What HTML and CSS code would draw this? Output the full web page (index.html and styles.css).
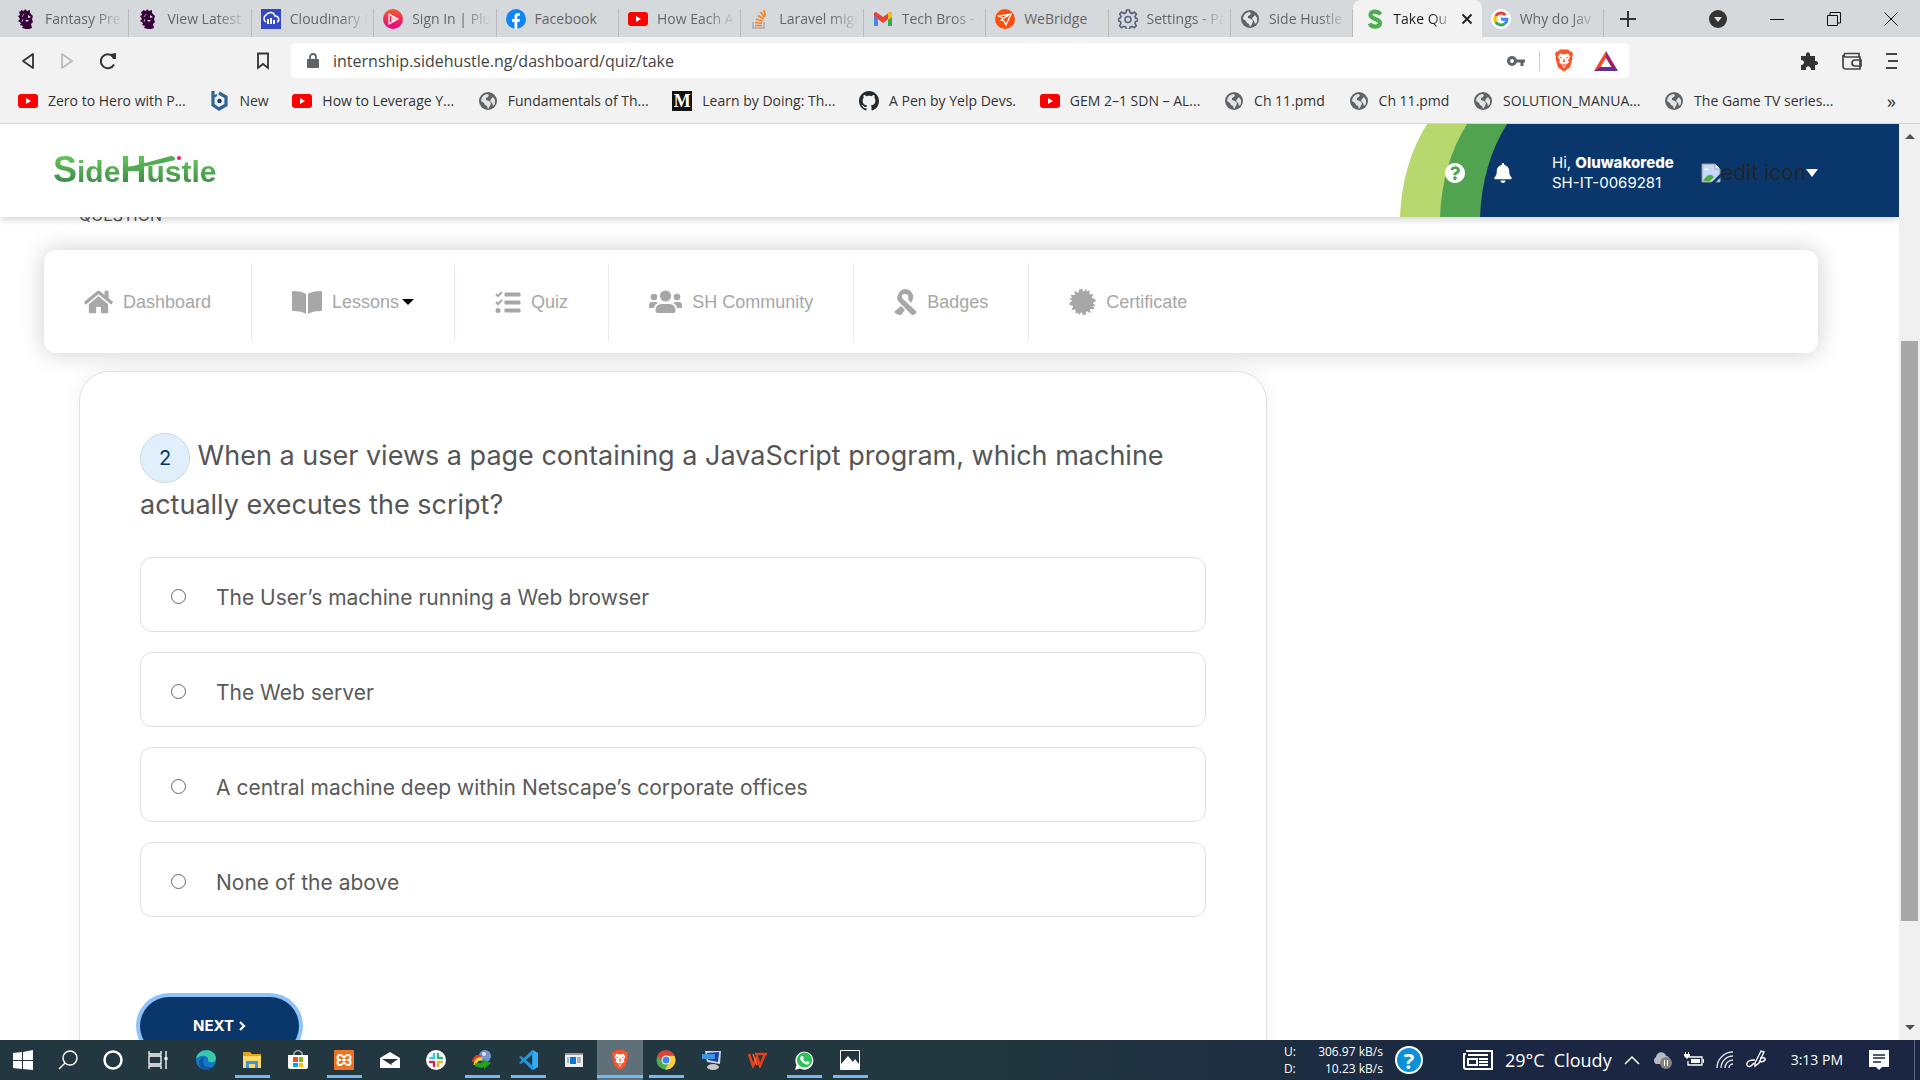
FILE: index.html
```html
<!DOCTYPE html>
<html lang="en">
<head>
<meta charset="utf-8">
<title>Take Quiz</title>
<link rel="stylesheet" href="styles.css">
</head>
<body>
<svg class="sprite" aria-hidden="true">
  <symbol id="yt" viewBox="0 0 20 20"><rect y="3" width="20" height="14" rx="3" fill="#f00"/><path d="M8 7l5 3-5 3z" fill="#fff"/></symbol>
  <symbol id="globe" viewBox="0 0 20 20"><circle cx="10" cy="10" r="9" fill="#5f6368"/><path d="M3 10c0-3 2-6 6-7l2 1-1 2-2 1v2l3 1 2 2-1 3-2 3-1-3-2-1-1-2zM13 8l2-2 2 3v4l-2 2-1-3-2-2z" fill="#e4e4e4"/></symbol>
  <symbol id="lion" viewBox="0 0 20 20"><path d="M5 1l3 1 1-2 2 2 3-1 0 3 3 3-1 3 1 3-2 2 1 4-3 1-3 0-4-1 1-2-3-1 1-2-3-2 2-2-2-3 2-1-1-3 2-1z" fill="#37003c"/><path d="M12 6l3 2-3 1zM9 11l4 0-2 2z" fill="#e6dfe8"/><path d="M8 5l-2 3M7 10l-1 3" stroke="#a894ad"/></symbol>
  <symbol id="brave" viewBox="0 0 20 22"><path d="M6 0h8l2 2 2 0 1 3-1 2 .5 2-2.500 9-6 4-6-4L1.500 9 2 7 1 5l1-3h2z" fill="#fb542b"/><path d="M6 4l4 1 4-1 2 3-2 4 1 2-3 2-2 4-2-4-3-2 1-2-2-4z" fill="#fff"/><path d="M5 7l3 1-1 1zM15 7l-3 1 1 1zM10 8l1 4-1 1-1-1zM8 14l2 1 2-1-2 3z" fill="#fb542b"/></symbol>
</svg>

<div class="tabstrip">
  <nav class="tabs" aria-label="Tabs">
    <div class="tab"><svg class="ico"><use href="#lion"/></svg><span>Fantasy Prem</span></div>
    <div class="tab"><svg class="ico"><use href="#lion"/></svg><span>View Latest</span></div>
    <div class="tab"><svg class="ico" viewBox="0 0 20 20"><rect width="20" height="20" fill="#3448c5"/><path d="M5 13a4 4 0 0 1 0-7c3-4 8-3 9 1 4 0 5 5 2 6" fill="none" stroke="#fff" stroke-width="1.500"/><path d="M6 10h2v5H6zM9 9h2v6H9zM12 11h2v4h-2z" fill="#fff"/></svg><span>Cloudinary M</span></div>
    <div class="tab"><svg class="ico" viewBox="0 0 20 20"><defs><linearGradient id="ps" x2="0" y2="1"><stop stop-color="#f05a28"/><stop offset="1" stop-color="#ec008c"/></linearGradient></defs><circle cx="10" cy="10" r="10" fill="url(#ps)"/><path d="M6 5l9 5-9 5zM9 8l3 2-3 2z" fill="none" stroke="#fff" stroke-width="1.200"/></svg><span>Sign In | Plu</span></div>
    <div class="tab"><svg class="ico" viewBox="0 0 20 20"><circle cx="10" cy="10" r="10" fill="#1085f5"/><path d="M8.500 20v-7H6v-3h2.500V8c0-3 1.500-4 3.500-4l2 .2v2.500h-1.300c-1 0-1.400.6-1.400 1.300v2H14l-.5 3h-2.200v7z" fill="#fff"/></svg><span class="whole">Facebook</span></div>
    <div class="tab"><svg class="ico"><use href="#yt"/></svg><span>How Each A</span></div>
    <div class="tab"><svg class="ico" viewBox="0 0 20 20"><path d="M3 13v6h11v-6" fill="none" stroke="#a9abae" stroke-width="1.500"/><path d="M5 16.500h7M5.200 13.500l7 .7M6 10.200l6.600 1.800M8 6.500l5.500 3.700M10.500 3l4 5.500M14 1l1.200 6.500" stroke="#f48024" stroke-width="1.600"/></svg><span>Laravel migr</span></div>
    <div class="tab"><svg class="ico" viewBox="0 0 20 20"><path d="M1 5v12h4V9z" fill="#4285f4"/><path d="M19 5v12h-4V9z" fill="#34a853"/><path d="M1 4l2-1 7 5 7-5 2 1v3l-9 7-9-7z" fill="#ea4335"/><path d="M15 4.500l2-1.500 2 1v4l-4 3z" fill="#fbbc04"/></svg><span>Tech Bros - A</span></div>
    <div class="tab"><svg class="ico" viewBox="0 0 20 20"><circle cx="10" cy="10" r="10" fill="#ff4d0d"/><path d="M4 7l12-2-5 11-2-4-3-1 8-5-6 3z" fill="#ff4d0d" stroke="#fff" stroke-width="1.300"/></svg><span class="whole">WeBridge</span></div>
    <div class="tab"><svg class="ico" viewBox="0 0 20 20"><path d="M8.500 1h3l.6 2.600 2 .9 2.300-1.400 2 2-1.400 2.400.8 1.700 2 .5v2l-2.100.8-.8 1.900 1.400 2.300-2 2-2.300-1.300-2 .8-.6 2.300h-3l-.6-2.400-2-.8-2.200 1.400-2-2L3 14.300l-.8-1.900L.500 12V9.500L2.200 9 3 7.300 1.700 5l2-2L6 4.500l2-.9z" fill="none" stroke="#5a5f7d" stroke-width="1.600"/><circle cx="10" cy="10.500" r="3" fill="none" stroke="#5a5f7d" stroke-width="1.500"/></svg><span>Settings - Pa</span></div>
    <div class="tab"><svg class="ico"><use href="#globe"/></svg><span>Side Hustle</span></div>
    <div class="tab active"><svg class="ico" viewBox="0 0 20 20"><path d="M15.500 5.500C13 1.500 5.500 1.500 5.500 6s9.500 3.500 9.500 8-8 5-10.500.500" fill="none" stroke="#4cae4f" stroke-width="4.200"/></svg><span>Take Qu</span><button class="x" aria-label="Close tab"><svg width="12" height="12" viewBox="0 0 12 12"><path d="M1.500 1.500l9 9m0-9l-9 9" stroke="#222" stroke-width="2"/></svg></button></div>
    <div class="tab"><svg class="ico" viewBox="0 0 20 20"><circle cx="10" cy="10" r="10" fill="#fff"/><g fill="none" stroke-width="3"><path d="M14.500 6A6 6 0 0 0 4.800 7" stroke="#ea4335"/><path d="M4.800 7a6 6 0 0 0 0 6" stroke="#fbbc05"/><path d="M4.800 13a6 6 0 0 0 9 1.600" stroke="#34a853"/><path d="M13.800 14.600A6 6 0 0 0 16 10.200h-6" stroke="#4285f4"/></g></svg><span>Why do Jav</span></div>
  </nav>
  <button class="plain" aria-label="New tab"><svg width="16" height="16" viewBox="0 0 16 16"><path d="M8 0v16M0 8h16" stroke="#333" stroke-width="2"/></svg></button>
  <div class="winctl">
    <button class="plain" aria-label="Search tabs"><svg width="18" height="18" viewBox="0 0 18 18"><circle cx="9" cy="9" r="9" fill="#333"/><path d="M5 7h8l-4 5z" fill="#ddd"/></svg></button>
    <button class="plain" aria-label="Minimize"><svg width="14" height="14" viewBox="0 0 14 14"><path d="M0 7.500h14" stroke="#111"/></svg></button>
    <button class="plain" aria-label="Restore"><svg width="14" height="14" viewBox="0 0 14 14"><path d="M.500 3.500h10v10H.500zM3 3V.500h10.500V11H11" fill="none" stroke="#111"/></svg></button>
    <button class="plain" aria-label="Close"><svg width="14" height="14" viewBox="0 0 14 14"><path d="M.500.500l13 13m0-13l-13 13" stroke="#111"/></svg></button>
  </div>
</div>

<div class="toolbar">
  <div class="navbtns">
    <button class="plain" aria-label="Back"><svg width="14" height="18" viewBox="0 0 14 18"><path d="M12 2v14L2 9z" fill="none" stroke="#333" stroke-width="1.800" stroke-linejoin="round"/></svg></button>
    <button class="plain" aria-label="Forward"><svg width="14" height="18" viewBox="0 0 14 18"><path d="M2 2v14l10-7z" fill="none" stroke="#bbb" stroke-width="1.800" stroke-linejoin="round"/></svg></button>
    <button class="plain" aria-label="Reload"><svg width="18" height="18" viewBox="0 0 18 18"><path d="M15 12.500A7 7 0 1 1 14 4.500" fill="none" stroke="#333" stroke-width="2"/><path d="M11 2l6-1v6l-3 0z" fill="#333"/></svg></button>
  </div>
  <button class="plain mark" aria-label="Bookmark"><svg width="14" height="18" viewBox="0 0 14 18"><path d="M2 1.500h10v14.500l-5-4-5 4z" fill="none" stroke="#333" stroke-width="1.800"/></svg></button>
  <div class="address">
    <svg width="12" height="16" viewBox="0 0 12 16"><path d="M3 7V4a3 3 0 0 1 6 0v3" fill="none" stroke="#5f6368" stroke-width="1.800"/><rect y="6" width="12" height="9" rx="1" fill="#5f6368"/></svg>
    <input class="url" aria-label="Address" value="internship.sidehustle.ng/dashboard/quiz/take">
    <svg width="18" height="12" viewBox="0 0 18 12"><circle cx="5" cy="6" r="3.500" fill="none" stroke="#5f6368" stroke-width="3"/><path d="M8 6h10M15 6v5" stroke="#5f6368" stroke-width="3"/></svg>
    <i class="sep"></i>
    <svg width="20" height="23"><use href="#brave"/></svg>
    <svg width="24" height="20" viewBox="0 0 24 20"><path d="M12 0L0 20l6-3 6-10z" fill="#ff4724"/><path d="M12 0l12 20-6-3-6-10z" fill="#9e1f63"/><path d="M0 20h24l-6-4H6z" fill="#662d91"/></svg>
  </div>
  <div class="exts">
    <button class="plain" aria-label="Extensions"><svg width="18" height="18" viewBox="0 0 18 18"><path d="M1 4h5c-1-5 5-5 4 0h5v5c4-1 4 5 0 4v5h-4c0-5-6-5-5 0H1v-5c4 0 4-5 0-5z" fill="#333"/></svg></button>
    <button class="plain" aria-label="Wallet"><svg width="20" height="18" viewBox="0 0 20 18"><path d="M17 5V1.500H3a2 2 0 0 0 0 3.500h15v12H4q-3 0-3-3V3M19 8h-6a3 3 0 0 0 0 6h6z" fill="none" stroke="#444" stroke-width="1.700"/></svg></button>
    <button class="plain" aria-label="Menu"><svg width="12" height="18" viewBox="0 0 12 18"><path d="M0 2h11M2 9h10M0 16h11" stroke="#444" stroke-width="2"/></svg></button>
  </div>
</div>

<nav class="bookmarks" aria-label="Bookmarks">
  <a href="#"><svg class="ico"><use href="#yt"/></svg>Zero to Hero with P...</a>
  <a href="#"><svg class="ico" viewBox="0 0 20 20"><path d="M10 2L17 6v8l-7 4-6-4V0" fill="none" stroke="#2f6690" stroke-width="3.200"/><path d="M4 6l4-2" stroke="#2f6690" stroke-width="2"/><circle cx="10.500" cy="10" r="2.200" fill="#1b3f66"/></svg>New</a>
  <a href="#"><svg class="ico"><use href="#yt"/></svg>How to Leverage Y...</a>
  <a href="#"><svg class="ico"><use href="#globe"/></svg>Fundamentals of Th...</a>
  <a href="#"><span class="ico medium">M</span>Learn by Doing: Th...</a>
  <a href="#"><svg class="ico" viewBox="0 0 16 16"><path fill="#24292e" d="M8 0C3.580 0 0 3.580 0 8c0 3.540 2.290 6.530 5.470 7.590.4.070.550-.170.550-.380 0-.190-.010-.820-.010-1.490-2.010.370-2.530-.490-2.690-.940-.090-.230-.480-.940-.820-1.130-.280-.150-.680-.520-.010-.530.630-.010 1.080.580 1.230.820.720 1.210 1.870.870 2.330.660.070-.520.280-.870.510-1.070-1.780-.2-3.640-.890-3.640-3.950 0-.870.310-1.590.820-2.150-.080-.2-.360-1.020.080-2.120 0 0 .670-.210 2.200.820.640-.180 1.320-.270 2-.270s1.360.090 2 .270c1.530-1.040 2.200-.820 2.200-.820.440 1.100.160 1.920.080 2.120.510.560.820 1.270.820 2.150 0 3.070-1.870 3.750-3.650 3.950.290.250.540.730.540 1.480 0 1.070-.010 1.930-.010 2.200 0 .210.150.460.550.380A8.010 8.010 0 0 0 16 8c0-4.420-3.580-8-8-8z"/></svg>A Pen by Yelp Devs.</a>
  <a href="#"><svg class="ico"><use href="#yt"/></svg>GEM 2–1 SDN – AL...</a>
  <a href="#"><svg class="ico"><use href="#globe"/></svg>Ch 11.pmd</a>
  <a href="#"><svg class="ico"><use href="#globe"/></svg>Ch 11.pmd</a>
  <a href="#"><svg class="ico"><use href="#globe"/></svg>SOLUTION_MANUA...</a>
  <a href="#"><svg class="ico"><use href="#globe"/></svg>The Game TV series...</a>
  <button class="plain more" aria-label="More bookmarks">»</button>
</nav>

<div class="viewport">
  <div class="site">
    <header class="header">
      <a class="logo" href="#"><span class="big">S</span><span>ide</span><span class="big">H</span><span>ustle</span>
        <svg class="swoosh" width="60" height="16" viewBox="0 0 60 16"><path d="M0 14Q25 8 50 1q4 0 4 4Q28 12 0 14z" fill="#51ac51"/><circle cx="58" cy="3" r="2" fill="#f0147c"/></svg></a>
      <div class="account">
        <svg class="waves" viewBox="0 0 499 93" preserveAspectRatio="none"><path d="M0 93Q2 40 27 0H499V93z" fill="#b6d86f"/><path d="M40 93Q42 40 67 0H499V93z" fill="#52a350"/><path d="M80 93Q82 40 107 0H499V93z" fill="#09376b"/></svg>
        <button class="plain" aria-label="Help"><svg width="20" height="20" viewBox="8 8 496 496"><path fill="#fff" d="M504 256c0 137-111 248-248 248S8 393 8 256C8 119 119 8 256 8s248 111 248 248zM262.700 90c-54.500 0-89.300 23-116.600 63.800-3.500 5.300-2.400 12.400 2.700 16.200l34.700 26.300c5.200 4 12.600 3 16.700-2.100 17.900-22.700 30.100-35.800 57.300-35.800 20.400 0 45.700 13.100 45.700 33 0 15-12.400 22.700-32.500 34C247.100 238.500 216 254.900 216 296v4c0 6.600 5.400 12 12 12h56c6.600 0 12-5.400 12-12v-1.300c0-28.500 83.200-29.600 83.200-106.700 0-58-60.200-102-116.500-102zM256 338c-25.400 0-46 20.600-46 46s20.600 46 46 46 46-20.600 46-46-20.600-46-46-46z"/></svg></button>
        <button class="plain bell" aria-label="Notifications"><svg width="18" height="20" viewBox="0 0 448 512"><path fill="#fff" d="M224 512c35.300 0 64-28.700 64-64H160c0 35.300 28.700 64 64 64zm215.400-149.700c-19.300-20.800-55.500-52-55.500-154.300 0-77.700-54.500-139.900-127.900-155.200V32c0-17.700-14.300-32-32-32s-32 14.300-32 32v20.800C118.600 68.100 64.100 130.300 64.100 208c0 102.300-36.200 133.500-55.500 154.300-6 6.400-8.700 14.200-8.600 21.700.1 16.400 13 32 32.100 32h383.800c19.100 0 32-15.600 32.100-32 0-7.600-2.600-15.300-8.600-21.700z"/></svg></button>
        <div class="who">Hi, <b>Oluwakorede</b><br>SH-IT-0069281</div>
        <button class="plain avatar"><svg width="20" height="20" viewBox="0 0 20 20"><path d="M1 1h13l5 5v13H1z" fill="#c5d6f8" stroke="#999"/><path d="M14 1v5h5" fill="#fff" stroke="#999"/><path d="M3 7q2-4 5 0z" fill="#fff"/><path d="M2 18q6-10 11-4l-4 4z" fill="#4caf3f"/><path d="M20 10L10 20h4l6-6z" fill="#09376b"/></svg><span>edit icon</span><svg width="12" height="8" viewBox="0 0 12 8"><path d="M0 0h12L6 8z" fill="#fff"/></svg></button>
      </div>
    </header>

    <h2 class="crumb">QUESTION</h2>

    <nav class="menu" aria-label="Main">
      <a href="#"><svg width="29" height="24" viewBox="0 24 576 464"><path d="M280.400 148.300L96 300.100V464a16 16 0 0 0 16 16l112-.3a16 16 0 0 0 16-16V368a16 16 0 0 1 16-16h64a16 16 0 0 1 16 16v95.600a16 16 0 0 0 16 16L464 480a16 16 0 0 0 16-16V300L295.700 148.300a12.200 12.200 0 0 0-15.300 0zM571.600 251.500L488 182.600V44a12 12 0 0 0-12-12h-56a12 12 0 0 0-12 12v72.600L318.500 43a48 48 0 0 0-61 0L4.300 251.500a12 12 0 0 0-1.600 16.900l25.500 31A12 12 0 0 0 45 301l235.300-193.700a12.200 12.200 0 0 1 15.300 0L531 301a12 12 0 0 0 16.900-1.600l25.500-31a12 12 0 0 0-1.800-16.900z"/></svg>Dashboard</a>
      <a href="#"><svg width="30" height="24" viewBox="0 0 30 24"><path d="M0 2q0-1 1-1 9 0 13 3v20q-4-3-13-3-1 0-1-1zM30 2q0-1-1-1-9 0-13 3v20q4-3 13-3 1 0 1-1z"/></svg><span>Lessons<i class="caret"></i></span></a>
      <a href="#"><svg width="26" height="22" viewBox="0 0 26 22"><path d="M10 2h15v3H10zM10 10h15v3H10zM10 18h15v3H10z" stroke="#a7a7a7"/><circle cx="3" cy="19.500" r="2.500"/><path d="M1 3l2 2 4-4M1 11l2 2 4-4" fill="none" stroke="#a7a7a7" stroke-width="2"/></svg>Quiz</a>
      <a href="#"><svg width="33" height="24" viewBox="0 0 33 24"><circle cx="5" cy="7" r="3.300"/><circle cx="28" cy="7" r="3.300"/><circle cx="16.500" cy="6" r="5.600"/><path d="M0 18v-3q0-3 3-3h3q2 0 3 1-4 2-4 5zM33 18v-3q0-3-3-3h-3q-2 0-3 1 4 2 4 5zM6.500 21q0-7 6-7h8q6 0 6 7 0 2-2 2h-16q-2 0-2-2z"/></svg>SH Community</a>
      <a href="#"><svg width="23" height="26" viewBox="0 0 23 26"><path d="M11 0Q17 0 19 6q1 3-2 8l-3-4q1-2 0-4-3-2-6 0-1 2 1 4l13 12q1 1 0 2l-2 2q-1 0-2 0L5 13Q2 10 4 6 6 0 11 0zM7 17l4 4-4 5q-1 0-2 0l-4-2q-1-1 0-2z"/></svg>Badges</a>
      <a href="#"><svg width="27" height="26" viewBox="-13 -13 26 26"><g id="rays"><path d="M-2.500-9L-1.500-13h1L1-10 3-12.500h1L4.500-8zM2-9L6-11.500h1L7-7.500 10.500-8l.5.500L9-4 13-3v1l-3 2z"/><circle r="10"/></g><use href="#rays" transform="rotate(90)"/><use href="#rays" transform="rotate(180)"/><use href="#rays" transform="rotate(270)"/></svg>Certificate</a>
    </nav>

    <form class="card">
      <h1 class="question"><span class="num">2</span> When a user views a page containing a JavaScript program, which machine actually executes the script?</h1>
      <div class="options">
        <label class="option"><input type="radio" name="answer"><span>The User’s machine running a Web browser</span></label>
        <label class="option"><input type="radio" name="answer"><span>The Web server</span></label>
        <label class="option"><input type="radio" name="answer"><span>A central machine deep within Netscape’s corporate offices</span></label>
        <label class="option"><input type="radio" name="answer"><span>None of the above</span></label>
      </div>
      <button type="button" class="next">NEXT <svg width="7" height="10" viewBox="0 0 7 10"><path d="M1 1l4 4-4 4" fill="none" stroke="#fff" stroke-width="2.200"/></svg></button>
    </form>
  </div>
  <div class="scrollbar"><i class="up"></i><div class="track"><i class="thumb"></i></div><i class="down"></i></div>
</div>

<footer class="taskbar">
  <div class="sys">
    <span><svg width="20" height="20" viewBox="0 0 20 20"><path d="M0 3l9-1v8H0zM10 2l10-2v10H10zM0 11h9v8l-9-1zM10 11h10v9l-10-1z" fill="#fff"/></svg></span>
    <span><svg width="20" height="20" viewBox="0 0 20 20"><circle cx="12" cy="8" r="7" fill="none" stroke="#fff" stroke-width="1.400"/><path d="M7 13l-6 6" stroke="#fff" stroke-width="1.500"/></svg></span>
    <span><svg width="20" height="20" viewBox="0 0 20 20"><circle cx="10" cy="10" r="8.500" fill="none" stroke="#fff" stroke-width="2.500"/></svg></span>
    <span><svg width="20" height="20" viewBox="0 0 20 20"><path d="M1 1v3h12V1M1 6h12v8H1zM1 19v-3h12v3M18 1v18" fill="none" stroke="#fff" stroke-width="1.300"/><path d="M16.500 7h3v3h-3z" fill="#fff"/></svg></span>
  </div>
  <div class="apps">
    <span><svg width="20" height="20" viewBox="0 0 20 20"><circle cx="10" cy="10" r="10" fill="#1478c8"/><path d="M0 9C1-2 19-3 20 8c0 5-6 5-8 3 1-4-3-6-6-5C3 6 1 8 0 9z" fill="#39c8a8"/><path d="M7 10c-1 6 5 9 11 6-5 7-15 4-15-3 0-4 3-6 6-6-2 1-2 2-2 3z" fill="#1353a4"/></svg></span>
    <span class="run"><svg width="20" height="20" viewBox="0 0 20 20"><path d="M1 2h7l2 2h9v12H1z" fill="#e5a50c"/><path d="M1 6h18v12H1z" fill="#ffd868"/><path d="M4 18v-7h12v7h-3v-4H7v4z" fill="#3a96dd"/></svg></span>
    <span><svg width="20" height="20" viewBox="0 0 20 20"><path d="M6 6V3q4-5 8 0v3" fill="none" stroke="#aaa" stroke-width="1.500"/><path d="M0 5h20v12q0 2-2 2H2q-2 0-2-2z" fill="#fff"/><path d="M5 7h5v5H5z" fill="#f25022"/><path d="M11 7h4v5h-4z" fill="#7fba00"/><path d="M5 13h5v4H5z" fill="#00a4ef"/><path d="M11 13h4v4h-4z" fill="#ffb900"/></svg></span>
    <span class="run"><svg width="20" height="20" viewBox="0 0 20 20"><rect width="20" height="20" rx="1" fill="#ee7420"/><path d="M7 10H6a2 2 0 0 1 0-5q2 0 4 2.500Q12 5 14 5a2 2 0 0 1 0 5h-1M7 10H6a2 2 0 0 0 0 5q2 0 4-2.500Q12 15 14 15a2 2 0 0 0 0-5h-1M8 10h4" fill="none" stroke="#fff" stroke-width="2"/></svg></span>
    <span><svg width="20" height="18" viewBox="0 0 20 18"><path d="M0 7l10-6 10 6v10H0z" fill="#fff"/><path d="M2 8l16 0-7 5 2 2z" fill="#22353f"/></svg></span>
    <span><svg width="20" height="20" viewBox="0 0 20 20"><circle cx="10" cy="10" r="10" fill="#fff"/><g stroke-width="2.400" stroke-linecap="round"><path d="M8 4v4M4.500 8H8" stroke="#36c5f0"/><path d="M12 4v4M12 8h4" stroke="#2eb67d"/><path d="M12 12v4M12 12h4" stroke="#ecb22e"/><path d="M8 12v4M4 12h4" stroke="#e01e5a"/></g></svg></span>
    <span class="run"><svg width="20" height="20" viewBox="0 0 20 20"><circle cx="13" cy="6" r="6" fill="#7894cc"/><circle cx="12" cy="4" r="2" fill="#dce6fa"/><path d="M1 12Q4 4 9 7" fill="none" stroke="#e43b26" stroke-width="3"/><path d="M3 15Q4 8 10 9" fill="none" stroke="#f5dc22" stroke-width="3"/><path d="M3 16q6 3 9 1v2l7-6-8-4v3q-4 2-8 1z" fill="#24a321"/></svg></span>
    <span class="run"><svg width="20" height="20" viewBox="0 0 20 20"><path d="M14 0l6 3v14l-6 3L1 7l2-1 11 9V5L3 14l-2-1z" fill="#2596de"/><path d="M15 0l5 3v14l-5 3z" fill="#38a9f1"/></svg></span>
    <span><svg width="18" height="14" viewBox="0 0 18 14"><path d="M0 0h18v14H0z" fill="#eee"/><path d="M0 0h18v2H0z" fill="#999"/><path d="M5 4h6v7H5z" fill="#0878d4"/><path d="M2 5h2M2 7h2M2 9h2M12 5h4M12 7h4M12 9h4" stroke="#777"/></svg></span>
    <span class="run on"><svg width="18" height="20"><use href="#brave"/></svg></span>
    <span class="run"><svg width="20" height="20" viewBox="0 0 20 20"><circle cx="10" cy="10" r="9.500" fill="#4caf50"/><path d="M1.500 5.500a9.500 9.500 0 0 1 17 0H10L6 12z" fill="#db4437"/><path d="M18.500 6A9.500 9.500 0 0 1 9 19.500l5-8L13 6z" fill="#ffcd40"/><circle cx="10" cy="10" r="4.500" fill="#fff"/><circle cx="10" cy="10" r="3.500" fill="#4285f4"/></svg></span>
    <span><svg width="20" height="20" viewBox="0 0 20 20"><path d="M3 1l16 0-1 13-13-2z" fill="#ccd4e0"/><path d="M5 3l12-1-1 10-10-2z" fill="#1c3ca8"/><path d="M0 4h13v5H0z" fill="#3c94e6"/><ellipse cx="11" cy="17" rx="6" ry="3" fill="#c8c8c8"/></svg></span>
    <span><svg width="20" height="16" viewBox="0 0 20 16"><path d="M1 2l4 12 4-9 3 9 5-12M7 2h12" fill="none" stroke="#e8401c" stroke-width="2.600"/><path d="M5 2l4 11" stroke="#ff6a3a" stroke-width="1.500"/></svg></span>
    <span class="run"><svg width="20" height="20" viewBox="0 0 20 20"><path d="M1 20l1.500-5A9 9 0 1 1 6 18.500z" fill="#fff"/><circle cx="10.500" cy="10" r="7.600" fill="#29c451"/><path d="M7 6l2 0 1 2-1 1.500 3 2.500 1.500-1 2 1q0 3-3 2.500C9 14 6 10 6 8z" fill="#fff"/></svg></span>
    <span class="run"><svg width="20" height="20" viewBox="0 0 20 20"><path d="M.500.500h19v19H.500z" fill="#22353f" stroke="#fff"/><path d="M1 14l7-8 5 6 2-3 4 5v5H1z" fill="#fff"/></svg></span>
  </div>
  <div class="tray">
    <dl class="net"><dt>U:</dt><dd>306.97 kB/s</dd><dt>D:</dt><dd>10.23 kB/s</dd></dl>
    <span class="help">?</span>
    <svg class="news" width="30" height="20" viewBox="0 0 30 20"><path d="M3 1h26v18H3q-2 0-2-2V4h2M5 5h20M5 9h9v6H5zM16 9h9M16 12h9M16 15h9" fill="none" stroke="#fff" stroke-width="2"/></svg>
    <span class="weather">29°C&nbsp; Cloudy</span>
    <svg width="16" height="10" viewBox="0 0 16 10"><path d="M1 9l7-7 7 7" fill="none" stroke="#fff" stroke-width="1.500"/></svg>
    <svg width="20" height="20" viewBox="0 0 20 20"><path d="M4 14a4 4 0 0 1 0-7c1-6 9-6 10-1 5 0 5 8 1 8z" fill="#b5bcc6"/><circle cx="14" cy="13" r="6" fill="#85827e"/><path d="M12.500 10v6M15.500 10v6" stroke="#fff"/></svg>
    <svg width="20" height="16" viewBox="0 0 20 16"><path d="M5 5h13v8H4V9" fill="none" stroke="#fff" stroke-width="1.300"/><path d="M7 7h9v4H7zM19 7h1v4h-1zM0 2h6v2L3 7 0 4zM1 0h1v2H1zM4 0h1v2H4z" fill="#fff"/></svg>
    <svg width="18" height="18" viewBox="0 0 18 18"><path d="M1 17A16 16 0 0 1 17 1M5 17A12 12 0 0 1 17 5M9 17a8 8 0 0 1 8-8M13 17a4 4 0 0 1 4-4" fill="none" stroke="#d9dde4" stroke-width="1.400"/></svg>
    <svg width="20" height="20" viewBox="0 0 20 20"><path d="M9 13L15 1l3 1-5 11-4 3zM9 10q-9 0-8 5 2 4 7-2M14 8q6-1 5 2-2 3-6 1" fill="none" stroke="#fff" stroke-width="1.400"/></svg>
    <time>3:13 PM</time>
    <svg width="20" height="20" viewBox="0 0 20 20"><path d="M0 0h20v17h-7l-3 3-3-3H0z" fill="#fff"/><path d="M4 5h12M4 8h12M4 12h8" stroke="#1b2743" stroke-width="1.300"/></svg>
  </div>
</footer>
</body>
</html>
```
FILE: styles.css
```css
* { box-sizing: border-box; }
body {
  margin: 0;
  height: 100vh;
  display: flex;
  flex-direction: column;
  overflow: hidden;
  background: #f2f2f2;
  font: 14px/20px "Open Sans", "Noto Sans", sans-serif;
  color: #333;
}
a { color: inherit; text-decoration: none; }
svg { flex: none; }
.sprite { position: absolute; width: 0; height: 0; }
.plain { border: 0; padding: 0; background: none; display: flex; align-items: center; font: inherit; color: inherit; }
.ico { width: 20px; height: 20px; flex: none; }

/* Tab strip */
.tabstrip { display: flex; align-items: center; height: 37px; padding: 0 22px 0 7px; background: #d5d9dc; }
.tabs { display: flex; flex: 0 1 1597px; min-width: 0; height: 100%; margin-right: 16px; }
.tab { flex: 1 1 0; min-width: 0; display: flex; align-items: center; gap: 9px; padding: 0 6px 0 9px; position: relative; color: #666; }
.tab::after { content: ""; position: absolute; right: 0; top: 9px; bottom: 0; width: 1px; background: #b8bcbf; }
.tab span { flex: 1; overflow: hidden; white-space: nowrap; mask-image: linear-gradient(90deg, #000 65%, transparent); }
.tab .whole { mask-image: none; }
.tab.active { background: #f2f2f2; border-radius: 8px 8px 0 0; color: #222; padding: 0 9px 0 12px; gap: 8px; }
.tab.active::after { display: none; }
.x { border: 0; padding: 0; background: none; display: flex; }
.winctl { margin-left: auto; display: flex; align-items: center; gap: 43px; }

/* Toolbar */
.toolbar { display: flex; align-items: center; height: 47px; padding: 0 22px 0 21px; }
.navbtns { display: flex; gap: 25px; flex: none; }
.mark { margin: 0 21px 0 139px; }
.address { flex: 0 1 1338px; display: flex; align-items: center; height: 35px; padding: 0 11px 0 16px; background: #fff; border-radius: 5px; }
.url { flex: 1; min-width: 0; margin-left: 14px; padding: 0; border: 0; background: none; font: 16px/24px "Open Sans", sans-serif; color: #444; }
.sep { width: 1px; height: 20px; background: #ccc; margin: 0 14px; }
.address svg:last-child { margin-left: 20px; }
.exts { margin-left: auto; display: flex; gap: 24px; }

/* Bookmarks */
.bookmarks { display: flex; align-items: center; justify-content: space-between; height: 40px; padding: 0 24px 6px 18px; border-bottom: 1px solid #d4d4d4; white-space: nowrap; }
.bookmarks a { display: flex; align-items: center; gap: 10px; }
.medium { background: #111; color: #fff; font: bold 18px/20px "Liberation Serif", serif; text-align: center; }
.more { font-size: 18px; margin-left: 30px; }

/* Page area */
.viewport { flex: 1; min-height: 0; display: flex; background: #fff; }
.site { flex: 1; min-width: 0; overflow: hidden; font-family: Inter, "Open Sans", sans-serif; }
.header { position: relative; z-index: 3; display: flex; justify-content: space-between; height: 93px; padding-left: 53px; background: #fff; box-shadow: 0 2px 8px rgba(0,0,0,.2); }
.logo { align-self: center; position: relative; display: flex; align-items: baseline; font: bold 30px/40px "Liberation Sans", sans-serif; }
.logo span { background: linear-gradient(#62c15a 20%, #3c8746 85%); -webkit-background-clip: text; background-clip: text; color: transparent; }
.logo .big { font-size: 36px; }
.swoosh { position: absolute; left: 68px; top: 5px; }
.account { position: relative; display: flex; align-items: center; width: 499px; padding: 5px 0 0 45px; color: #fff; }
.account > * { position: relative; }
.account .waves { position: absolute; inset: 0; width: 100%; height: 100%; }
.bell { margin: 0 40px 0 29px; }
.who { width: 149px; font-size: 15px; }
.who b { font-weight: 800; }
.avatar { font-size: 21px; color: #212529; }
.crumb { margin: -12px 0 0 79px; font-size: 16px; line-height: 20px; font-weight: 400; color: #555; }
.menu { position: relative; display: flex; margin: 25px 81px 0 44px; padding: 13px 0 12px; border-radius: 12px; background: #fff; box-shadow: 0 0 24px rgba(0,0,0,.2); font: 18px/24px "Liberation Sans", sans-serif; color: #a7a7a7; }
.menu a { display: flex; align-items: center; gap: 10px; height: 78px; padding: 0 40px; border-right: 1px solid #e6eaf2; }
.menu a:last-child { border: 0; }
.menu svg { fill: #a7a7a7; }
.caret { display: inline-block; margin-left: 3px; vertical-align: 3px; border: 6px solid transparent; border-top-color: #000; border-bottom: 0; }
.card { position: relative; width: 1188px; max-width: calc(100% - 158px); margin: 18px 0 0 79px; padding: 59px 60px 60px; border: 1px solid #e0e0e0; border-radius: 30px; background: #fff; box-shadow: 0 0 20px rgba(0,0,0,.06); }
.question { margin: 0 0 28px; font-size: 27px; line-height: 49px; font-weight: 400; color: #555; }
.num { display: inline-block; width: 50px; height: 50px; margin: -4px 0; border: 1px solid #c8d8e8; border-radius: 50%; background: #e1effd; color: #09376b; font-size: 20px; line-height: 48px; text-align: center; vertical-align: middle; }
.options { display: grid; gap: 20px; }
.option { display: flex; align-items: center; gap: 30px; height: 75px; padding: 6px 30px 0; border: 1px solid #e0e0e0; border-radius: 12px; font-size: 21px; line-height: 28px; color: #5a5a5a; }
.option input { appearance: none; flex: none; width: 15px; height: 15px; margin: 0 0 2px; border: 1px solid #666; border-radius: 50%; background: #fff; }
.next { display: flex; align-items: center; justify-content: center; gap: 5px; margin-top: 80px; width: 159px; height: 58px; border: 0; border-radius: 29px; background: #09376b; box-shadow: 0 0 0 4px #8fc3fb; color: #fff; font: bold 15px/20px Inter, sans-serif; }
.scrollbar { flex: none; width: 21px; display: flex; flex-direction: column; align-items: center; padding: 10px 0; background: #f0f0f0; }
.up { border: 5px solid transparent; border-bottom-color: #505050; border-top: 0; }
.down { border: 5px solid transparent; border-top-color: #505050; border-bottom: 0; }
.track { flex: 1; width: 17px; padding: 202px 0 104px; display: flex; }
.thumb { flex: 1; background: #a8a8a8; }

/* Taskbar */
.taskbar { flex: none; display: flex; height: 40px; background: linear-gradient(90deg, #22373f 50%, #1a2642 80%); color: #fff; }
.sys, .apps { display: flex; }
.sys { margin-right: 3px; }
.sys span { width: 45px; display: grid; place-items: center; }
.apps span { width: 46px; display: grid; place-items: center; position: relative; }
.apps .on { background: #5f7078; }
.apps .run::after { content: ""; position: absolute; left: 6px; right: 5px; bottom: 2px; height: 3px; background: #76b9ed; }
.apps .on::after { left: 0; right: 0; }
.tray { flex: 1; display: flex; align-items: center; justify-content: flex-end; gap: 12px; margin-right: 5px; padding-right: 25px; border-right: 1px solid #5b6579; }
.net { display: grid; grid-template-columns: auto auto; column-gap: 18px; margin: 0; width: 99px; font-size: 12px; line-height: 17px; }
.net dd { margin: 0; text-align: right; white-space: nowrap; }
.help { width: 28px; height: 28px; border: 2px solid #fff; border-radius: 50%; background: #0c90d8; text-align: center; font: bold 22px/24px "Open Sans", sans-serif; }
.news { margin-left: 28px; }
.weather { font-size: 18px; line-height: 24px; white-space: nowrap; }
.tray time { margin: 0 14px 0 13px; white-space: nowrap; }
```
